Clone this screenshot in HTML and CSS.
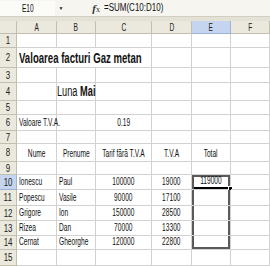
FILE: index.html
```html
<!DOCTYPE html>
<html>
<head>
<meta charset="utf-8">
<link rel="stylesheet" href="styles.css">
</head>
<body>
<div class="top">
  <div class="fbar">
    <div class="namebox"><span class="t">E10</span></div>
    <div class="dd">&#9660;</div>
    <div class="fx"><i>f</i><span class="x">x</span></div>
    <div class="formula"><span class="t">=SUM(C10:D10)</span></div>
  </div>
</div>
<div class="sheet">
  <div class="h"></div><div class="h"><span class="t">A</span></div><div class="h"><span class="t">B</span></div><div class="h"><span class="t">C</span></div><div class="h"><span class="t">D</span></div><div class="h hs"><span class="t">E</span></div><div class="h"><span class="t">F</span></div>

  <div class="h rh"><span class="t">1</span></div><div class="c"></div><div class="c"></div><div class="c"></div><div class="c"></div><div class="c"></div><div class="c"></div>

  <div class="h rh"><span class="t">2</span></div><div class="c l span3"><span class="t title">Valoarea facturi Gaz metan</span></div><div class="c"></div><div class="c"></div><div class="c"></div>

  <div class="h rh"><span class="t">3</span></div><div class="c"></div><div class="c"></div><div class="c"></div><div class="c"></div><div class="c"></div><div class="c"></div>

  <div class="h rh"><span class="t">4</span></div><div class="c"></div><div class="c m"><span class="t luna">Luna <b>Mai</b></span></div><div class="c"></div><div class="c"></div><div class="c"></div><div class="c"></div>

  <div class="h rh"><span class="t">5</span></div><div class="c"></div><div class="c"></div><div class="c"></div><div class="c"></div><div class="c"></div><div class="c"></div>

  <div class="h rh"><span class="t">6</span></div><div class="c l"><span class="t">Valoare T.V.A.</span></div><div class="c"></div><div class="c m"><span class="t">0.19</span></div><div class="c"></div><div class="c"></div><div class="c"></div>

  <div class="h rh"><span class="t">7</span></div><div class="c"></div><div class="c"></div><div class="c"></div><div class="c"></div><div class="c"></div><div class="c"></div>

  <div class="h rh"><span class="t">8</span></div><div class="c m"><span class="t">Nume</span></div><div class="c m"><span class="t">Prenume</span></div><div class="c m"><span class="t">Tarif fără T.V.A</span></div><div class="c m"><span class="t">T.V.A</span></div><div class="c m"><span class="t">Total</span></div><div class="c"></div>

  <div class="h rh"><span class="t">9</span></div><div class="c"></div><div class="c"></div><div class="c"></div><div class="c"></div><div class="c"></div><div class="c"></div>

  <div class="h rh hs"><span class="t">10</span></div><div class="c l"><span class="t">Ionescu</span></div><div class="c l"><span class="t">Paul</span></div><div class="c m"><span class="t">100000</span></div><div class="c m"><span class="t">19000</span></div><div class="c m active"><span class="t">119000</span><span class="handle"></span></div><div class="c"></div>

  <div class="h rh"><span class="t">11</span></div><div class="c l"><span class="t">Popescu</span></div><div class="c l"><span class="t">Vasile</span></div><div class="c m"><span class="t">90000</span></div><div class="c m"><span class="t">17100</span></div><div class="c box"></div><div class="c"></div>

  <div class="h rh"><span class="t">12</span></div><div class="c l"><span class="t">Grigore</span></div><div class="c l"><span class="t">Ion</span></div><div class="c m"><span class="t">150000</span></div><div class="c m"><span class="t">28500</span></div><div class="c box"></div><div class="c"></div>

  <div class="h rh"><span class="t">13</span></div><div class="c l"><span class="t">Rizea</span></div><div class="c l"><span class="t">Dan</span></div><div class="c m"><span class="t">70000</span></div><div class="c m"><span class="t">13300</span></div><div class="c box"></div><div class="c"></div>

  <div class="h rh"><span class="t">14</span></div><div class="c l"><span class="t">Cernat</span></div><div class="c l"><span class="t">Gheorghe</span></div><div class="c m"><span class="t">120000</span></div><div class="c m"><span class="t">22800</span></div><div class="c box last"></div><div class="c"></div>

  <div class="h rh"><span class="t">15</span></div><div class="c"></div><div class="c"></div><div class="c"></div><div class="c"></div><div class="c"></div><div class="c"></div>
</div>
</body>
</html>
```
FILE: styles.css
```css
html, body {
  margin: 0;
  padding: 0;
}
body {
  width: 270px;
  height: 266px;
  overflow: hidden;
  background: #e4e2d6;
  font-family: "Liberation Sans", Arial, sans-serif;
  font-size: 11px;
  color: #111;
}
.top {
  height: 21px;
  background: #e4e2d6;
}
.fbar {
  height: 17px;
  background: #f6f5f0;
  border-bottom: 1px solid #d2cfc0;
  box-sizing: border-box;
  display: flex;
  align-items: center;
}
.namebox {
  width: 55px;
  height: 15px;
  display: flex;
  align-items: center;
  justify-content: center;
  background: #fbfbf8;
}
.dd {
  width: 12px;
  font-size: 5px;
  text-align: center;
  color: #222;
}
.fx {
  width: 37px;
  display: flex;
  align-items: baseline;
  justify-content: flex-end;
  padding-right: 4px;
  box-sizing: border-box;
  font-family: "Liberation Serif", serif;
  font-size: 11px;
  color: #333;
}
.fx i {
  font-weight: bold;
}
.fx .x {
  font-size: 8px;
}
.formula {
  flex: 1;
  display: flex;
  align-items: center;
  font-size: 10px;
}
.formula .t {
  transform: scaleX(.8);
  transform-origin: left center;
}
.t {
  display: inline-block;
  white-space: nowrap;
  transform: scaleX(.6);
  transform-origin: center bottom;
  line-height: 1;
}
.sheet {
  display: grid;
  grid-template-columns: 17px 40px 39px 56px 40px 39px 39px;
  grid-template-rows: 13px 14px 20px 15px 18px 14px 16px 13px 18px 13px 15px 16px 15px 15px 14px 16px;
  background: #fff;
}
.h {
  background: #ebe9dd;
  border-right: 1px solid #c2bfae;
  border-bottom: 1px solid #c2bfae;
  box-sizing: border-box;
  display: flex;
  align-items: center;
  justify-content: center;
  color: #222;
}
.h .t {
  transform-origin: center center;
}
.h.rh .t {
  transform: scaleX(.72);
}
.h.hs {
  background: #c5d5ef;
  border-color: #9fb2d4;
}
.c {
  position: relative;
  border-right: 1px solid #d2d2d2;
  border-bottom: 1px solid #d2d2d2;
  box-sizing: border-box;
  display: flex;
  align-items: flex-end;
  padding-bottom: 2px;
  min-width: 0;
}
.c.l {
  justify-content: flex-start;
  padding-left: 2px;
}
.c.l .t {
  transform-origin: left bottom;
}
.c.m {
  justify-content: center;
}
.span3 {
  grid-column: span 3;
}
.title {
  font-size: 15px;
  font-weight: bold;
  transform: scaleX(.64);
}
.luna {
  font-size: 14px;
  transform: scaleX(.66);
}
.active {
  box-shadow: inset 2px 2px 0 #5a5a5a, inset -2px 0 0 #5a5a5a, inset 0 -2px 0 #000;
  padding-bottom: 3px;
}
.handle {
  position: absolute;
  right: -3px;
  bottom: -2px;
  width: 5px;
  height: 5px;
  background: #000;
  border: 1px solid #fff;
  box-sizing: border-box;
}
.box {
  box-shadow: inset 2px 0 0 #5a5a5a, inset -2px 0 0 #5a5a5a;
}
.box.last {
  box-shadow: inset 2px 0 0 #5a5a5a, inset -2px 0 0 #5a5a5a, inset 0 -2px 0 #5a5a5a;
}
```
